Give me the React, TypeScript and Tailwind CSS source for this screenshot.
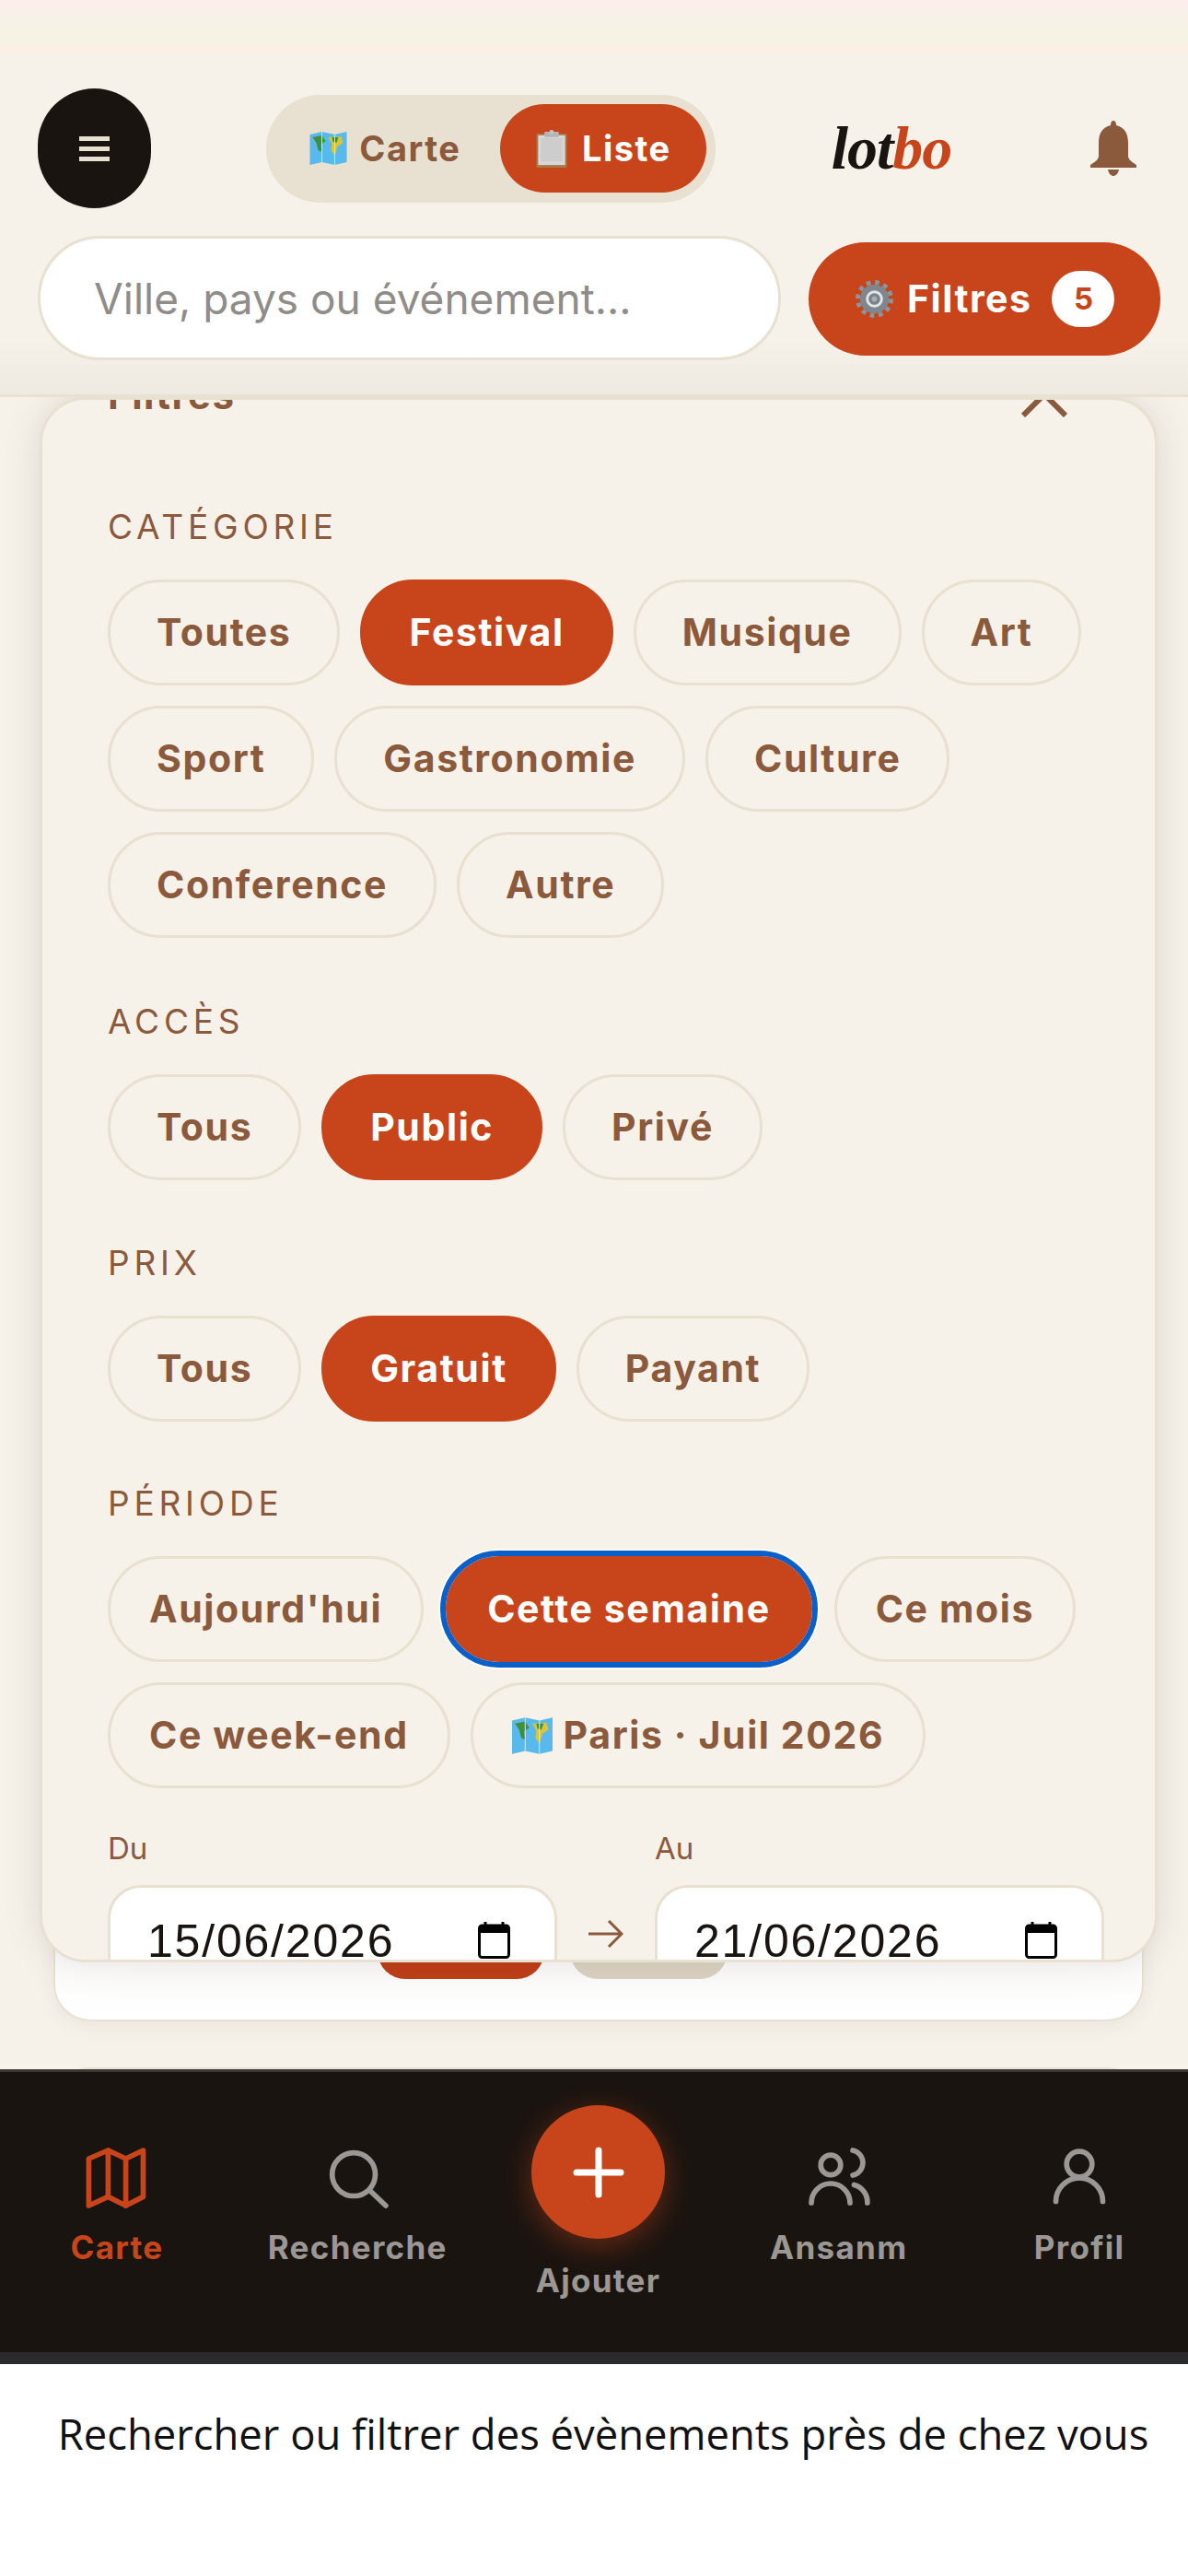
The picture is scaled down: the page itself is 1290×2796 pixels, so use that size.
import React from 'react';

const sans = "font-['Inter',sans-serif]";

function MapEmoji({ className }: { className?: string }) {
    return (
        <svg viewBox="0 0 40 36" className={className}>
            <path d="M0 3 L13 0 L27 3 L40 0 L40 33 L27 36 L13 33 L0 36 Z" fill="#58b9ec" />
            <path d="M3 6 L13 4 L17 10 L12 14 L13 22 L9 20 L7 12 Z" fill="#3f8f3c" />
            <path d="M20 6 L34 5 L36 12 L30 16 L27 26 L23 20 L24 13 Z" fill="#d9c43a" />
            <path d="M24 6 L31 6 L29 12 L25 11 Z" fill="#3f8f3c" />
            <path d="M13 0 V33 M27 3 V36" stroke="#c8e6f5" strokeWidth="1" />
        </svg>
    );
}

function ClipboardEmoji({ className }: { className?: string }) {
    return (
        <svg viewBox="0 0 34 42" className={className}>
            <rect x="0" y="4" width="34" height="38" rx="1" fill="#a87a4a" />
            <rect x="2" y="6" width="30" height="33" fill="#d8d8d8" />
            <rect x="5" y="9" width="24" height="26" fill="#cdcdcd" />
            <rect x="9" y="2" width="16" height="6" rx="1" fill="#b5b5b5" />
            <circle cx="17" cy="2.5" r="2.5" fill="#c4c4c4" />
        </svg>
    );
}

function GearEmoji({ className }: { className?: string }) {
    return (
        <svg viewBox="0 0 42 44" className={className}>
            <circle cx="21" cy="22" r="18.5" fill="none" stroke="#8d959c" strokeWidth="5" strokeDasharray="4.8 4.9" />
            <circle cx="21" cy="22" r="16" fill="#7f878e" />
            <circle cx="21" cy="22" r="9.5" fill="#e3e5e6" />
            <circle cx="21" cy="22" r="6.5" fill="#7b8289" />
            <circle cx="21" cy="22" r="3" fill="#a9afb4" />
        </svg>
    );
}

function Chip({ label, active, focused, tight, icon }: { label: string; active?: boolean; focused?: boolean; tight?: boolean; icon?: React.ReactNode }) {
    return (
        <button
            className={`h-[115px] rounded-full border-[3px] text-[41px] tracking-[1.6px] font-bold flex items-center gap-[12px] whitespace-nowrap
                ${tight ? 'px-[42px]' : 'px-[50px]'}
                ${active ? 'bg-[#c8441a] border-[#c8441a] text-white' : 'bg-[#f6f1e9] border-[#e8e0d0] text-[#8b5a3c]'}
                ${focused ? 'mx-[2px] outline-[6px] outline-[#0b5fc9] outline-solid shadow-[0_0_0_8px_#ffffff]' : ''}`}
        >
            {icon}
            {label}
        </button>
    );
}

function SectionLabel({ children }: { children: React.ReactNode }) {
    return <div className="h-[44px] leading-[44px] text-[37px] tracking-[4.8px] text-[#8b5a3c] mb-[35px]">{children}</div>;
}

function DateField({ label, value }: { label: string; value: string }) {
    return (
        <div>
            <div className="h-[40px] leading-[40px] text-[33px] text-[#8b5a3c] mb-[20px]">{label}</div>
            <div className="h-[120px] bg-white border-[3px] border-[#e8e0d0] rounded-[36px] pl-[40px] pr-[48px] flex items-center justify-between font-['Liberation_Sans',sans-serif] text-[50px] tracking-[1.8px] text-[#1a1410]">
                <span className="pt-[3px]">{value}</span>
                <svg viewBox="0 0 35 40" className="w-[35px] h-[40px]">
                    <path d="M8 0 V4 M27 0 V4" stroke="#000" strokeWidth="3" />
                    <rect x="1.5" y="4" width="32" height="34.5" rx="3" fill="#fff" stroke="#000" strokeWidth="3" />
                    <rect x="1.5" y="4" width="32" height="8" fill="#000" />
                </svg>
            </div>
        </div>
    );
}

function NavItem({ label, active, children }: { label: string; active?: boolean; children: React.ReactNode }) {
    return (
        <div className="w-[156px] pt-[76px] flex flex-col items-center">
            <div className={active ? 'text-[#c8441a]' : 'text-[#9a9794]'}>{children}</div>
            <div className={`mt-[20px] h-[44px] leading-[44px] text-[35px] tracking-[1.3px] font-bold whitespace-nowrap ${active ? 'text-[#c8441a]' : 'text-[#9a9794]'}`}>{label}</div>
        </div>
    );
}

const iconProps = { viewBox: '0 0 24 24', fill: 'none', stroke: 'currentColor', strokeWidth: 1.9, strokeLinecap: 'round' as const, strokeLinejoin: 'round' as const, className: 'w-[72px] h-[72px] overflow-visible' };

export default function App() {
    return (
        <div className={`w-[1290px] h-[2796px] bg-white flex flex-col overflow-hidden ${sans}`}>
            <div className="h-[2566px] flex flex-col bg-[#f6f1e9] overflow-hidden">
                {/* Header */}
                <header className="relative z-30 bg-[#f6f1e9] bg-[linear-gradient(180deg,#f6f1e9_85%,#eeeae2_100%)] border-b-[3px] border-[#e8e0d0] shrink-0">
                    <div className="h-[70px] pb-[12px]">
                        <div className="h-[58px] bg-[linear-gradient(180deg,#fdeeee_0%,#f7f1e8_30%,#f5f3e3_70%,#fdefe4_100%)]"></div>
                    </div>
                    <div className="pt-[26px] pl-[41px] pr-[30px] flex items-center justify-between">
                        <button className="w-[123px] h-[130px] rounded-full bg-[#1a1410] flex flex-col items-center justify-center gap-[6px]">
                            <span className="w-[33px] h-[5px] bg-[#e8e0d0]"></span>
                            <span className="w-[33px] h-[5px] bg-[#e8e0d0]"></span>
                            <span className="w-[33px] h-[5px] bg-[#e8e0d0]"></span>
                        </button>
                        <div className="w-[488px] h-[117px] rounded-full bg-[#e8e0d0] p-[10px] flex items-center text-[38px] font-bold tracking-[1.5px]">
                            <div className="flex-1 flex items-center justify-center gap-[13px] pr-[6px] text-[#8b5a3c]">
                                <MapEmoji className="w-[41px] h-[36px]" />
                                Carte
                            </div>
                            <div className="w-[224px] h-[96px] rounded-full bg-[#c8441a] text-white flex items-center justify-center gap-[16px]">
                                <ClipboardEmoji className="w-[34px] h-[41px]" />
                                Liste
                            </div>
                        </div>
                        <div className="w-[131px] font-['Liberation_Serif',serif] italic font-bold text-[66px] leading-none tracking-[-1px] whitespace-nowrap text-[#1a1410]">
                            lot<span className="text-[#c8441a]">bo</span>
                        </div>
                        <div className="w-[101px] flex justify-center">
                            <svg viewBox="0 0 50 60" className="w-[50px] h-[60px]">
                                <path d="M25 0 C27 0 28 2 28 5 C37 7 41 14 41 24 V38 C41 42 45 45 50 48 V51 H0 V48 C5 45 9 42 9 38 V24 C9 14 13 7 22 5 C22 2 23 0 25 0 Z" fill="#8b5a3c" />
                                <path d="M19 53 H31 C30 58 27 60 25 60 C23 60 20 58 19 53 Z" fill="#8b5a3c" />
                            </svg>
                        </div>
                    </div>
                    <div className="mt-[30px] pl-[41px] pr-[30px] pb-[37px] flex items-center gap-[30px]">
                        <input
                            placeholder="Ville, pays ou événement..."
                            className="w-[807px] h-[135px] rounded-full bg-white border-[3px] border-[#e8e0d0] pl-[58px] pr-[30px] text-[46px] outline-none placeholder:text-[#8f8c89]"
                        />
                        <button className="w-[382px] h-[123px] mt-[2px] rounded-full bg-[#c8441a] text-white text-[41px] tracking-[1.5px] font-bold flex items-center pl-[51px]">
                            <GearEmoji className="w-[41px] h-[43px]" />
                            <span className="ml-[15px]">Filtres</span>
                            <span className="ml-[22px] w-[68px] h-[61px] rounded-full bg-white text-[#c8441a] text-[33px] tracking-normal flex items-center justify-center">5</span>
                        </button>
                    </div>
                </header>

                {/* List + filter panel */}
                <main className="relative flex-1 overflow-hidden">
                    <div className="ml-[58px] mr-[48px] h-[1763px] rounded-[40px] bg-[linear-gradient(180deg,#ececec_0%,#f0f0f0_90%,#fdfcfb_97%,#ffffff_100%)] border-[2px] border-[#e8e0d0] shadow-[0_4px_24px_rgba(0,0,0,0.06)] overflow-hidden flex flex-col justify-between">
                        <div className="h-[30px] bg-[linear-gradient(90deg,#0f4c8f_0%,#0f4c8f_5%,#f5a623_5%,#f5a623_11%,#10427d_11%,#10427d_68%,#1b63b5_68%,#1b63b5_72%,#e7e4de_76%,#e7e4de_78%,#2a2018_78%,#2a2018_85%,#ffffff_85%,#ffffff_87%,#c98a68_88%,#a8532c_96%,#1a1410_98%)]"></div>
                        <div className="pl-[350px] pb-[44px] flex gap-[28px]">
                            <span className="w-[181px] h-[60px] rounded-full bg-[#bf4018]"></span>
                            <span className="w-[171px] h-[60px] rounded-full bg-[#dcd3c2]"></span>
                        </div>
                    </div>
                    <div className="ml-[58px] mr-[48px] mt-[50px] h-[100px] rounded-[40px] bg-white border-[2px] border-[#e8e0d0]"></div>

                    {/* Filter panel */}
                    <section className="absolute left-[43px] top-0 w-[1214px] h-[1699px] rounded-[50px] bg-[#f6f1e9] border-[3px] border-[#e8e0d0] shadow-[0_0_44px_rgba(0,0,0,0.1)] overflow-hidden pl-[71px] pr-[55px]">
                        <div className="-mt-[36px] h-[60px] flex items-center justify-between text-[#8b5a3c]">
                            <span className="text-[42px] tracking-[1.5px] font-bold">Filtres</span>
                            <svg viewBox="0 0 50 50" className="w-[50px] h-[50px] mr-[40px]" fill="none" stroke="currentColor" strokeWidth="6">
                                <path d="M2 2 L48 48 M48 2 L2 48" />
                            </svg>
                        </div>

                        <div className="mt-[92px]">
                            <SectionLabel>CATÉGORIE</SectionLabel>
                            <div className="flex flex-wrap gap-[22px]">
                                <Chip label="Toutes" />
                                <Chip label="Festival" active />
                                <Chip label="Musique" />
                                <Chip label="Art" />
                                <Chip label="Sport" />
                                <Chip label="Gastronomie" />
                                <Chip label="Culture" />
                                <Chip label="Conference" />
                                <Chip label="Autre" />
                            </div>
                        </div>

                        <div className="mt-[69px]">
                            <SectionLabel>ACCÈS</SectionLabel>
                            <div className="flex gap-[22px]">
                                <Chip label="Tous" />
                                <Chip label="Public" active />
                                <Chip label="Privé" />
                            </div>
                        </div>

                        <div className="mt-[68px]">
                            <SectionLabel>PRIX</SectionLabel>
                            <div className="flex gap-[22px]">
                                <Chip label="Tous" />
                                <Chip label="Gratuit" active />
                                <Chip label="Payant" />
                            </div>
                        </div>

                        <div className="mt-[67px]">
                            <SectionLabel>PÉRIODE</SectionLabel>
                            <div className="flex flex-wrap gap-[22px]">
                                <Chip label="Aujourd'hui" tight />
                                <Chip label="Cette semaine" active focused tight />
                                <Chip label="Ce mois" tight />
                                <Chip label="Ce week-end" tight />
                                <Chip label="Paris · Juil 2026" tight icon={<MapEmoji className="w-[44px] h-[40px]" />} />
                            </div>
                        </div>

                        <div className="mt-[45px] grid grid-cols-[488px_106px_488px]">
                            <DateField label="Du" value="15/06/2026" />
                            <div className="pt-[98px] flex justify-center text-[#8b5a3c]">
                                <svg viewBox="0 0 38 30" className="w-[38px] h-[30px]" fill="none" stroke="currentColor" strokeWidth="3">
                                    <path d="M0 15 H36 M22 1 L36 15 L22 29" />
                                </svg>
                            </div>
                            <DateField label="Au" value="21/06/2026" />
                        </div>
                    </section>
                </main>

                {/* Bottom nav */}
                <nav className="relative z-30 h-[307px] shrink-0 bg-[#1a1410] border-t-[3px] border-[#3a3632] pl-[49px] pr-[40px] flex justify-between">
                    <NavItem label="Carte" active>
                        <svg {...iconProps}>
                            <polygon points="1.8 6 1.8 23 8.8 19.8 15.2 23 21.5 19.8 21.5 3 15.2 6 8.8 3" />
                            <line x1="8.8" y1="3" x2="8.8" y2="19.8" />
                            <line x1="15.2" y1="6" x2="15.2" y2="23" />
                        </svg>
                    </NavItem>
                    <NavItem label="Recherche">
                        <svg {...iconProps}>
                            <circle cx="10.7" cy="11.7" r="7.8" />
                            <line x1="22.3" y1="23" x2="16.4" y2="17.4" />
                        </svg>
                    </NavItem>
                    <div className="w-[156px] pt-[36px] flex flex-col items-center">
                        <div className="w-[145px] h-[145px] rounded-full bg-[#c8441a] shadow-[0_8px_32px_rgba(200,68,26,0.45)] flex items-center justify-center">
                            <svg viewBox="0 0 56 56" className="w-[56px] h-[56px]" fill="none" stroke="#fff" strokeWidth="7" strokeLinecap="round">
                                <path d="M28 4 V52 M4 28 H52" />
                            </svg>
                        </div>
                        <div className="mt-[23px] h-[44px] leading-[44px] text-[35px] tracking-[1.3px] font-bold text-[#9a9794]">Ajouter</div>
                    </div>
                    <NavItem label="Ansanm">
                        <svg {...iconProps}>
                            <circle cx="9" cy="8.3" r="3.6" />
                            <path d="M17 3 a4.6 4.6 0 0 1 0 9" />
                            <path d="M2 22 a7 7 0 0 1 14 0" />
                            <path d="M17.5 15.5 a6.5 6.5 0 0 1 4.8 6.5" />
                        </svg>
                    </NavItem>
                    <NavItem label="Profil">
                        <svg {...iconProps}>
                            <circle cx="12" cy="8" r="4.6" />
                            <path d="M3.5 21.5 a8.5 8.5 0 0 1 17 0" />
                        </svg>
                    </NavItem>
                </nav>
                <div className="h-[13px] shrink-0 bg-[#2a2a2c]"></div>
            </div>

            {/* Caption under the phone frame */}
            <div className="h-[150px] pl-[20px] flex items-center justify-center font-['Open_Sans',sans-serif] text-[45.4px] text-[#111111] whitespace-nowrap">
                Rechercher ou filtrer des évènements près de chez vous
            </div>
        </div>
    );
}
